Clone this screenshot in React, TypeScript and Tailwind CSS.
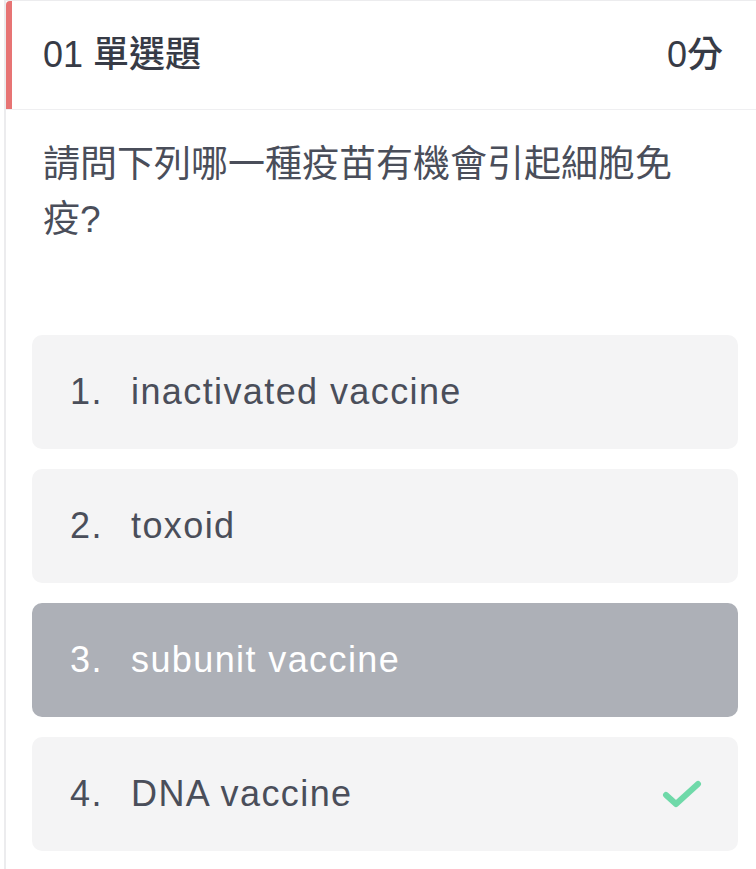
const options = [
  { no: "1.", text: "inactivated vaccine", selected: false, correct: false },
  { no: "2.", text: "toxoid", selected: false, correct: false },
  { no: "3.", text: "subunit vaccine", selected: true, correct: false },
  { no: "4.", text: "DNA vaccine", selected: false, correct: true },
];

const font = { fontFamily: '"Liberation Sans", "Noto Sans CJK TC", sans-serif' };

const App = () => {
  return (
    <div className="w-[756px] h-[869px] overflow-hidden bg-white" style={font}>
      <div className="ml-1 h-full border-l-2 border-t border-[#ececee]">
        <header className="flex h-[109px] items-stretch border-b border-[#efeff1]">
          <div className="w-[6px] rounded-tl-[4px] bg-[#e77474]" />
          <div className="flex flex-1 items-center justify-between pl-[31px] pr-[33px] text-[36px] font-medium text-[#373b46]">
            <span>01 單選題</span>
            <span>0分</span>
          </div>
        </header>

        <p className="pl-[37px] pr-[50px] pt-[27px] text-[37px] leading-[55px] text-[#4a4e5a]">
          請問下列哪一種疫苗有機會引起細胞免疫?
        </p>

        <div className="ml-[26px] mr-[18px] mt-[88px] flex flex-col gap-[20px]">
          {options.map((o) => (
            <div
              key={o.no}
              className={
                o.selected
                  ? "flex h-[114px] items-center rounded-[10px] bg-[#adb0b7] pl-[38px] pr-[36px] text-[36px] tracking-[1.4px] text-white"
                  : "flex h-[114px] items-center rounded-[10px] bg-[#f4f4f5] pl-[38px] pr-[36px] text-[36px] tracking-[1.4px] text-[#4a4e5a]"
              }
            >
              <span className="w-[61px]">{o.no}</span>
              <span className="flex-1">{o.text}</span>
              {o.correct && (
                <svg width="40" height="28" viewBox="0 0 40 28" fill="none">
                  <path
                    d="M4 15 L14 24 L36 4"
                    stroke="#6fd9a9"
                    strokeWidth="6"
                    strokeLinecap="round"
                    strokeLinejoin="round"
                  />
                </svg>
              )}
            </div>
          ))}
        </div>
      </div>
    </div>
  );
};

export default App;
